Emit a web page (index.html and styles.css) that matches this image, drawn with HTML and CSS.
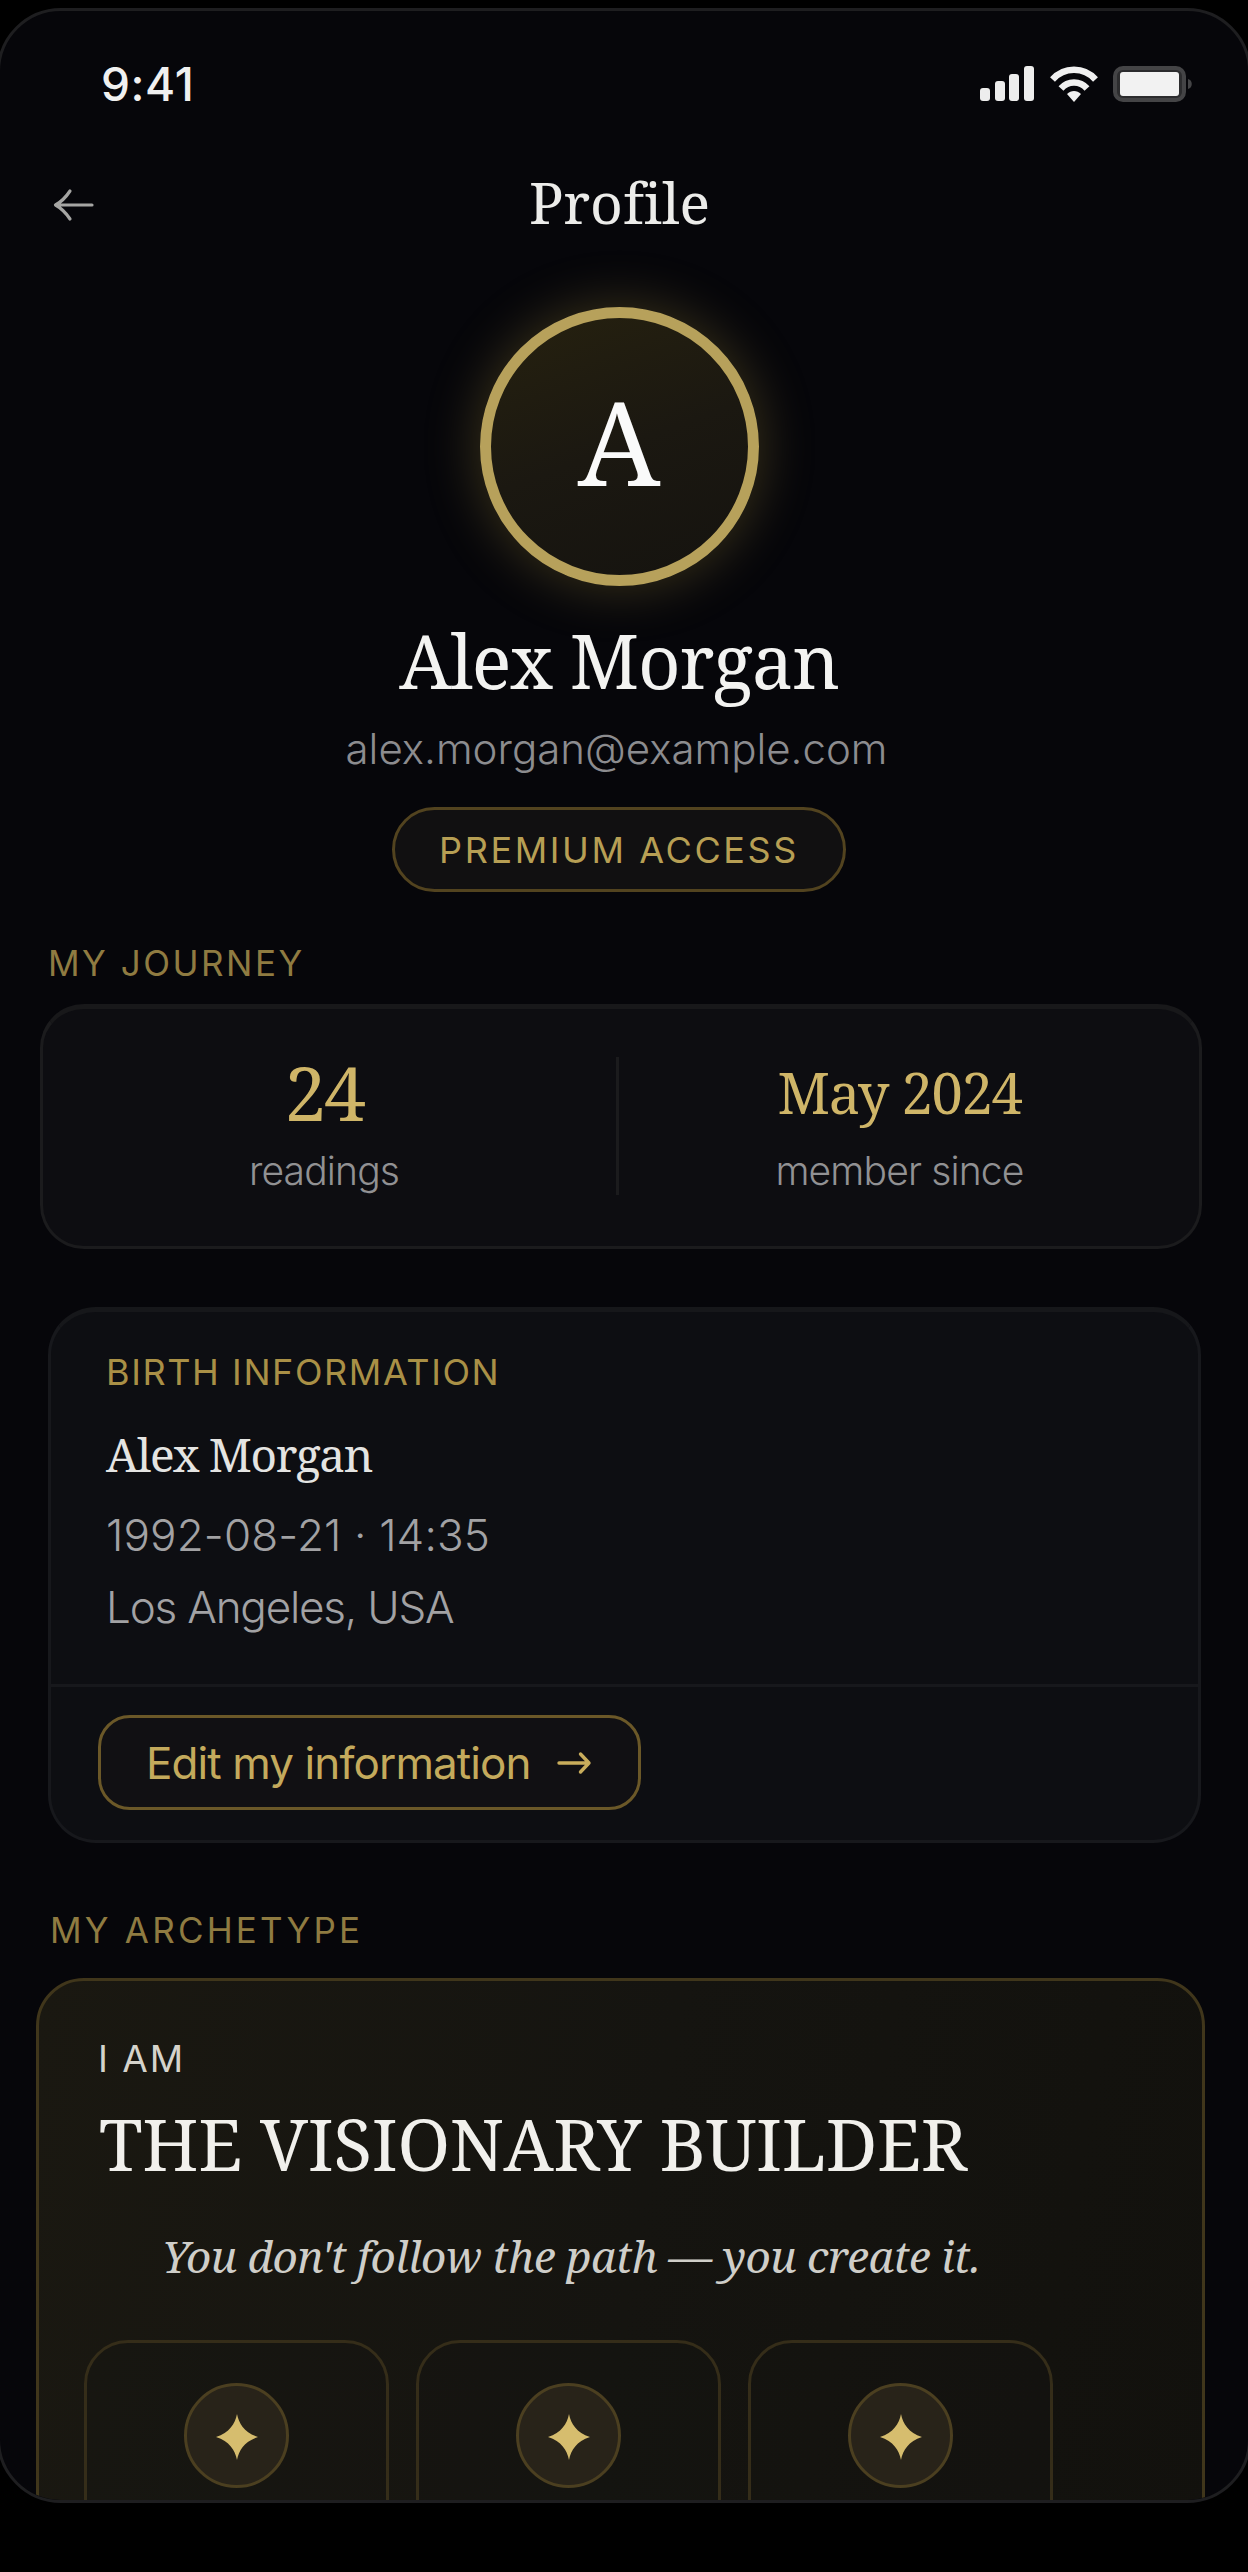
FILE: index.html
```html
<!DOCTYPE html>
<html lang="en">
<head>
<meta charset="utf-8">
<title>Profile</title>
<link rel="stylesheet" href="styles.css">
</head>
<body>
<svg width="0" height="0" class="defs" aria-hidden="true">
  <symbol id="star" viewBox="0 0 44 46"><path d="M22 0C24 10 29.500 18.500 43 23C29.500 27.500 24 36 22 46C20 36 14.500 27.500 1 23C14.500 18.500 20 10 22 0Z" fill="currentColor"/></symbol>
</svg>
<main class="screen">
  <div class="status">
    <span class="time">9:41</span>
    <div class="indicators">
      <svg width="55" height="36" viewBox="0 0 55 36" fill="#ededed"><rect x="0" y="22" width="10" height="13" rx="3"/><rect x="15" y="15" width="10" height="20" rx="3"/><rect x="29" y="8" width="10" height="27" rx="3"/><rect x="44" y="0" width="10" height="35" rx="3"/></svg>
      <svg width="48" height="36" viewBox="0 0 48 36" fill="none" stroke="#f0f0f0" stroke-width="6.500"><path d="M2.500 13.500C14 0.500 34 0.500 45.500 13.500"/><path d="M11 22.500C18 14.500 30 14.500 37 22.500"/><path d="M24 36L17 28C21 24 27 24 31 28Z" fill="#f0f0f0" stroke="none"/></svg>
      <svg width="80" height="36" viewBox="0 0 80 36"><rect x="2" y="2" width="69" height="32" rx="8" fill="#2c2c2e" stroke="#444446" stroke-width="4"/><rect x="7" y="6" width="59" height="24" rx="3" fill="#f2f2f2"/><path d="M75 13c5 1 5 9 0 10z" fill="#444446"/></svg>
    </div>
  </div>

  <header class="header">
    <svg class="back" width="42" height="40" viewBox="0 0 42 40" fill="none" stroke="#a5a5a3" stroke-width="3.200" stroke-linecap="round" stroke-linejoin="round"><path d="M39 23H3M17 9C13 15 8 20 2.500 23C8 26 13 31 17 37"/></svg>
    <h1 class="title">Profile</h1>
  </header>

  <section class="identity">
    <div class="avatar">A</div>
    <h2 class="name">Alex Morgan</h2>
    <p class="email">alex.morgan@example.com</p>
    <span class="pill">PREMIUM ACCESS</span>
  </section>

  <h3 class="label label-journey">MY JOURNEY</h3>
  <section class="journey">
    <div class="stat stat-left"><div class="value value-lg">24</div><div class="caption">readings</div></div>
    <div class="rule"></div>
    <div class="stat stat-right"><div class="value">May 2024</div><div class="caption">member since</div></div>
  </section>

  <section class="birth">
    <div class="birth-info">
      <h3 class="birth-label">BIRTH INFORMATION</h3>
      <p class="birth-name">Alex Morgan</p>
      <p class="birth-date">1992-08-21 · 14:35</p>
      <p class="birth-place">Los Angeles, USA</p>
    </div>
    <div class="birth-actions">
      <button class="edit"><span>Edit my information</span>
        <svg width="36" height="26" viewBox="0 0 36 26" fill="none" stroke="#c9ad5c" stroke-width="3.400" stroke-linecap="round" stroke-linejoin="round"><path d="M3 13H33M24.500 4L33 13L24.500 22"/></svg>
      </button>
    </div>
  </section>

  <h3 class="label label-archetype">MY ARCHETYPE</h3>
  <section class="archetype">
    <p class="iam">I AM</p>
    <h2 class="arch-title">THE VISIONARY BUILDER</h2>
    <p class="motto">You don't follow the path — you create it.</p>
    <div class="tiles">
      <div class="tile"><span class="badge"><svg width="44" height="46"><use href="#star"/></svg></span></div>
      <div class="tile"><span class="badge"><svg width="44" height="46"><use href="#star"/></svg></span></div>
      <div class="tile"><span class="badge"><svg width="44" height="46"><use href="#star"/></svg></span></div>
    </div>
  </section>
</main>
</body>
</html>
```
FILE: styles.css
```css
* { box-sizing: border-box; }
html, body { margin: 0; background: #000; }
body { height: 2572px; padding-top: 8px; overflow: hidden; font-family: Inter, "Liberation Sans", sans-serif; color: #f0f0f0; }
h1, h2, h3, p { margin: 0; font-weight: 400; }
svg { display: block; flex: none; }
.defs { display: none; }

.screen {
  width: 1254px;
  height: 2495px;
  margin-left: -3px;
  padding: 48px 46px 0 36px;
  border: 3px solid #1e1e20;
  border-radius: 64px;
  background: #06060a;
  overflow: hidden;
}

.status { display: flex; align-items: center; justify-content: space-between; height: 50px; padding: 0 9px 0 65px; }
.time { font-size: 46px; line-height: 50px; font-weight: 500; letter-spacing: .6px; }
.indicators { display: flex; align-items: center; gap: 15px; }

.header { display: grid; grid-template-columns: 60px 1fr 60px; align-items: center; height: 70px; margin-top: 58px; }
.back { margin-left: 17px; }
.title { padding-left: 1px; text-align: center; font: 400 57px/70px "Noto Serif", serif; letter-spacing: -.1px; color: #ececea; }

.identity { display: flex; flex-direction: column; align-items: center; }
.avatar {
  display: flex; align-items: center; justify-content: center;
  width: 279px; height: 279px; margin-top: 70px; padding-bottom: 12px;
  border: 11px solid #b7a15b; border-radius: 50%;
  background: linear-gradient(160deg, #26210f 0%, #1b1811 50%, #15130f 100%);
  box-shadow: 0 0 52px 4px rgba(185, 158, 70, .27);
  font: 400 117px/117px "Noto Serif", serif; color: #fafafa;
}
.name { margin-top: 30px; font: 400 74px/90px "Noto Serif", serif; letter-spacing: -1.2px; color: #f3f3f1; }
.email { margin: 18px 5px 0 0; font-size: 42px; line-height: 50px; font-weight: 300; color: #8c8c8f; }
.pill {
  display: flex; align-items: center; justify-content: center;
  width: 454px; height: 85px; margin-top: 33px; padding-top: 1px;
  border: 3px solid #52431f; border-radius: 43px; background: #111011;
  font-size: 36px; letter-spacing: 2.6px; color: #b79f54;
}

.label { padding-left: 12px; font-size: 35px; line-height: 44px; color: #8f7b41; }
.label-journey { margin-top: 49px; letter-spacing: 2.500px; }
.label-archetype { margin-top: 65px; padding-left: 14px; letter-spacing: 3.200px; }

.journey {
  display: grid; grid-template-columns: 573px 3px 1fr;
  height: 245px; margin: 19px 0 0 4px;
  border: 3px solid #1b1b1d; border-top: 5px solid #18181a; border-radius: 44px;
  background: #0d0d11;
}
.stat { padding-top: 41px; text-align: center; }
.stat-left { padding-right: 11px; }
.stat-right { padding-right: 19px; }
.rule { height: 138px; margin-top: 48px; background: #1b1b1d; }
.value { font: 400 56px/84px "Noto Serif", serif; letter-spacing: -1.3px; color: #cfb568; }
.value-lg { font-size: 75px; letter-spacing: -2.500px; }
.caption { margin-top: 14px; font-size: 39px; line-height: 46px; font-weight: 300; letter-spacing: -.85px; color: #919193; }

.birth {
  height: 536px; margin: 58px 1px 0 12px;
  border: 3px solid #17181c; border-top: 5px solid #16171a; border-radius: 48px;
  background: #0d0e12;
}
.birth-info { height: 375px; padding: 38px 55px 0; border-bottom: 3px solid #17181c; }
.birth-label { font-size: 36px; line-height: 44px; letter-spacing: 1.6px; color: #a99046; }
.birth-name { margin-top: 32px; font: 400 46px/56px "Noto Serif", serif; letter-spacing: -1.4px; color: #e4e4e2; }
.birth-date, .birth-place { font-size: 44px; line-height: 54px; font-weight: 300; color: #a2a2a4; }
.birth-date { margin-top: 26px; letter-spacing: .15px; }
.birth-place { margin-top: 18px; letter-spacing: -1.2px; }
.birth-actions { padding: 28px 47px 0; }
.edit {
  display: flex; align-items: center; justify-content: space-between;
  width: 543px; height: 95px; padding: 1px 46px 0 45px;
  border: 3px solid #6b5828; border-radius: 32px; background: #111013;
  font-family: inherit; font-size: 44px; font-weight: 400; letter-spacing: -.9px; color: #c4aa5c;
}

.archetype {
  height: 700px; margin: 26px -3px 0 0; padding-top: 56px;
  border: 3px solid #40361b; border-radius: 48px;
  background: linear-gradient(100deg, #1a1811 0%, #151410 50%, #12110d 100%);
}
.iam { padding-left: 59px; font-size: 37px; line-height: 44px; letter-spacing: 2px; color: #d5d3cb; }
.arch-title { margin-top: 21px; padding-left: 60px; font: 400 71px/84px "Noto Serif", serif; letter-spacing: -.35px; color: #f1f0ec; white-space: nowrap; }
.motto { margin-top: 42px; padding-left: 123px; font: italic 400 44px/56px "Noto Serif", serif; letter-spacing: -.5px; color: #cfcec9; white-space: nowrap; }
.tiles { display: flex; gap: 27px; margin-top: 56px; padding-left: 45px; }
.tile { display: flex; justify-content: center; width: 305px; height: 300px; padding-top: 40px; border: 3px solid #352d19; border-radius: 44px; background: rgba(20, 20, 18, .35); }
.badge { display: flex; align-items: center; justify-content: center; width: 105px; height: 105px; padding-top: 2px; border: 3px solid #4b3f20; border-radius: 50%; background: #282319; color: #d6bd6e; }
```
